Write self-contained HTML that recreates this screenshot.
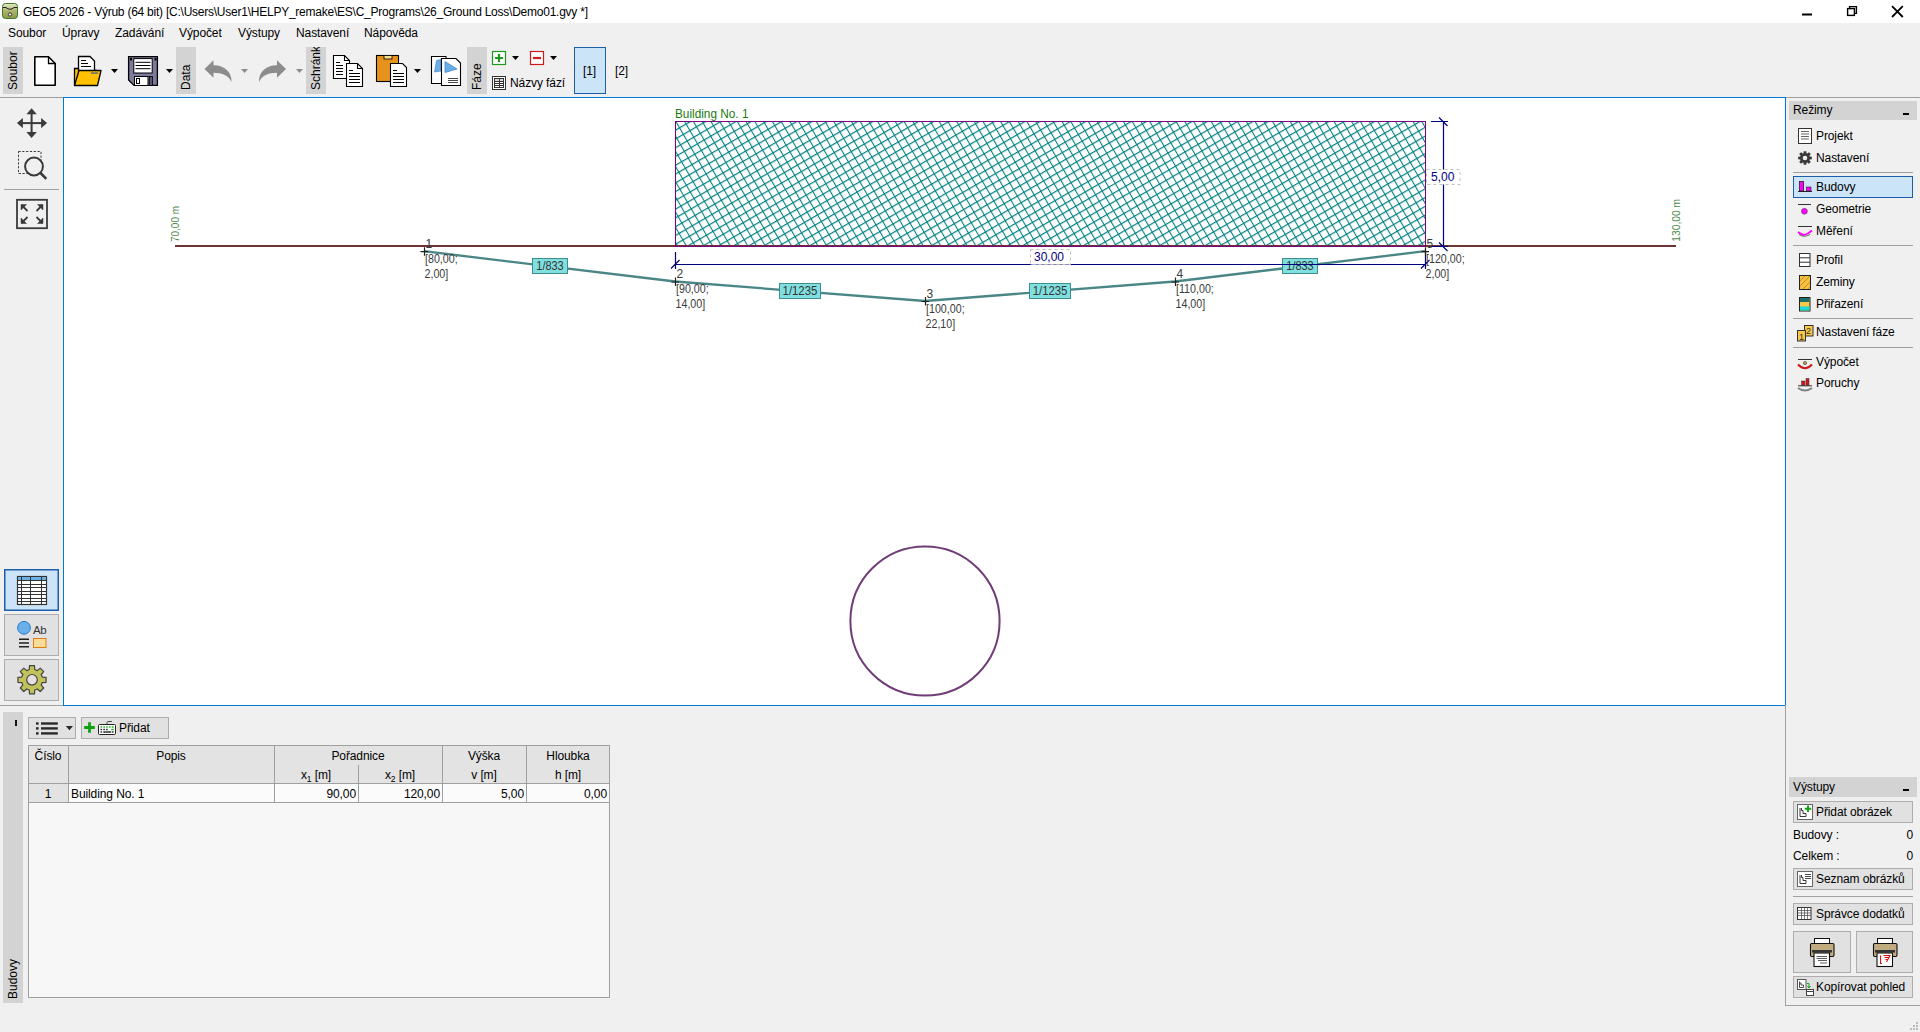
<!DOCTYPE html>
<html><head><meta charset="utf-8">
<style>
*{box-sizing:border-box;margin:0;padding:0}
html,body{width:1920px;height:1032px;overflow:hidden;background:#f0f0f0;font-family:"Liberation Sans",sans-serif;font-size:12px;color:#000}
.a{position:absolute}
.t{position:absolute;white-space:pre;line-height:16px;font-size:12px;letter-spacing:-0.1px}
.vt{position:absolute;background:#d3d3d3}
.vt span{position:absolute;white-space:pre;transform:rotate(-90deg);transform-origin:0 0;line-height:16px;font-size:12px}
.btn{position:absolute;background:#e1e1e1;border:1px solid #adadad}
.sep{position:absolute;height:1px;background:#a0a0a0}
</style></head><body>

<!-- title bar -->
<div class="a" style="left:0;top:0;width:1920px;height:23px;background:#fff"></div>
<svg class="a" style="left:2px;top:3px" width="16" height="16" viewBox="0 0 16 16">
 <defs><linearGradient id="gi" x1="0" y1="0" x2="0" y2="1"><stop offset="0" stop-color="#e6ecc8"/><stop offset="0.5" stop-color="#aab46a"/><stop offset="1" stop-color="#8a9a48"/></linearGradient></defs>
 <rect x="0.5" y="0.5" width="15" height="15" rx="3" fill="url(#gi)" stroke="#3a7a2a"/>
 <path d="M1 4.5 L4 4.5 Q8 8 12 4.5 L15 4.5" fill="none" stroke="#222" stroke-width="1"/>
 <circle cx="8" cy="11.5" r="1.6" fill="#fff" stroke="#222" stroke-width="0.9"/>
</svg>
<div class="t" style="left:23px;top:4px;letter-spacing:-0.24px">GEO5 2026 - Výrub (64 bit) [C:\Users\User1\HELPY_remake\ES\C_Programs\26_Ground Loss\Demo01.gvy *]</div>
<svg class="a" style="left:1790px;top:0" width="130" height="23">
 <rect x="12" y="13.5" width="10" height="2" fill="#000"/>
 <rect x="57.6" y="8.6" width="6.8" height="6.8" fill="none" stroke="#000" stroke-width="1.4"/>
 <path d="M59.6 8.6 V6.6 H66.4 V13.4 H64.4" fill="none" stroke="#000" stroke-width="1.4"/>
 <path d="M102 6.2 L112.8 17 M112.8 6.2 L102 17" stroke="#000" stroke-width="1.8"/>
</svg>

<!-- menu -->
<div class="t" style="left:8px;top:25px">Soubor</div>
<div class="t" style="left:62px;top:25px">Úpravy</div>
<div class="t" style="left:115px;top:25px">Zadávání</div>
<div class="t" style="left:179px;top:25px">Výpočet</div>
<div class="t" style="left:238px;top:25px">Výstupy</div>
<div class="t" style="left:296px;top:25px">Nastavení</div>
<div class="t" style="left:364px;top:25px">Nápověda</div>

<!-- TOOLBAR -->
<!-- toolbar tabs -->
<div class="vt" style="left:3px;top:47px;width:20px;height:47px;overflow:hidden"><span style="left:2px;top:42.5px">Soubor</span></div>
<div class="vt" style="left:176px;top:47px;width:20px;height:47px;overflow:hidden"><span style="left:1.5px;top:42.5px">Data</span></div>
<div class="vt" style="left:306px;top:47px;width:20px;height:47px;overflow:hidden"><span style="left:1.5px;top:42.5px">Schránka</span></div>
<div class="vt" style="left:467px;top:47px;width:20px;height:47px;overflow:hidden"><span style="left:1.5px;top:42.5px">Fáze</span></div>
<svg class="a" style="left:0;top:0" width="700" height="97" viewBox="0 0 700 97">
 <!-- new -->
 <path d="M34.8 56.8 H48.5 L55.2 63.5 V85.2 H34.8 Z" fill="#fff" stroke="#000" stroke-width="1.6" stroke-linejoin="round"/>
 <path d="M48.5 56.8 V63.5 H55.2" fill="none" stroke="#000" stroke-width="1.3"/>
 <!-- open -->
 <path d="M78.5 56.5 H90 L94.5 61 V73 H78.5 Z" fill="#fff" stroke="#000" stroke-width="1.3"/>
 <path d="M81 60.5 H86 M81 63.5 H88 M81 66.5 H91" stroke="#000" stroke-width="1"/>
 <path d="M74.5 85.5 V68.5 H78.5 V73 H95 V70.5 H97" fill="#ffc000" stroke="#000" stroke-width="1.3"/>
 <path d="M79 70.5 H101 L97.5 85.5 H74.5 Z" fill="#ffc000" stroke="#000" stroke-width="1.3" stroke-linejoin="round"/>
 <rect x="91" y="72.3" width="7" height="1.6" fill="#6a7080"/>
 <path d="M111 69 H118 L114.5 73 Z" fill="#000"/>
 <!-- save -->
 <path d="M128.6 56.6 H157.4 V85.4 H134 L128.6 80 Z" fill="#7d7a9c" stroke="#000" stroke-width="1.3"/>
 <rect x="133.8" y="58.6" width="18.4" height="14.4" fill="#fff" stroke="#000" stroke-width="1"/>
 <path d="M135.5 62.3 H150.5 M135.5 65.5 H150.5 M135.5 68.7 H150.5" stroke="#000" stroke-width="1"/>
 <rect x="134.5" y="76.5" width="13.5" height="9" fill="#fff" stroke="#000" stroke-width="1"/>
 <rect x="136.5" y="78.5" width="3" height="5" fill="none" stroke="#000" stroke-width="1"/>
 <rect x="149.5" y="76.5" width="3" height="9" fill="#5a5878" stroke="#000" stroke-width="0.8"/>
 <rect x="130" y="58" width="2" height="2.5" fill="#000"/><rect x="154.5" y="58" width="2" height="2.5" fill="#000"/>
 <path d="M166 69 H173 L169.5 73 Z" fill="#000"/>
 <!-- undo / redo -->
 <path id="undo" d="M204.5 69 L213.5 60.3 V65.3 C224 65 232 72 231.5 82 C228.5 75.5 222.5 72.8 213.5 72.8 V77.7 Z" fill="#8c8c8c"/>
 <use href="#undo" transform="translate(490.5,0) scale(-1,1)"/>
 <path d="M241 69 H248 L244.5 73 Z" fill="#8c8c8c"/>
 <path d="M296 69 H303 L299.5 73 Z" fill="#8c8c8c"/>
 <!-- copy -->
 <g stroke="#000" stroke-width="1.1">
 <path d="M333.5 55.5 H344.5 L349.5 60.5 V78.5 H333.5 Z" fill="#fff"/>
 <path d="M344.5 55.5 V60.5 H349.5" fill="none"/>
 <path d="M336 62.5 H340 M336 65.5 H343 M336 68.5 H343 M336 71.5 H343 M336 74.5 H343" fill="none"/>
 <path d="M346.5 63.5 H357.5 L362.5 68.5 V86.5 H346.5 Z" fill="#fff"/>
 <path d="M357.5 63.5 V68.5 H362.5" fill="none"/>
 <path d="M349 70.5 H353 M349 73.5 H360 M349 76.5 H360 M349 79.5 H360 M349 82.5 H360" fill="none"/>
 </g>
 <!-- paste -->
 <rect x="376.5" y="55.5" width="22" height="26" fill="#e8921e" stroke="#000" stroke-width="1.1"/>
 <rect x="384" y="55.5" width="8" height="3.5" fill="#f8dc8c" stroke="#000" stroke-width="0.8"/>
 <path d="M390.5 63.5 H402.5 L406.5 67.5 V86.5 H390.5 Z" fill="#fff" stroke="#000" stroke-width="1.1"/>
 <path d="M393 70.5 H397 M393 73.5 H404 M393 76.5 H404 M393 79.5 H404 M393 82.5 H404" stroke="#000" stroke-width="1"/>
 <path d="M414 69 H421 L417.5 73 Z" fill="#000"/>
 <!-- paste special -->
 <path d="M431.5 56.5 H446 V83.5 H431.5 Z" fill="#fff" stroke="#000" stroke-width="1.1"/>
 <path d="M436.5 60.5 L441 59.5 V71 L434.5 72 Z" fill="#6aaee8" stroke="#3a7ac0" stroke-width="0.6"/>
 <path d="M441.5 58.5 H456 L460.5 63 V85.5 H441.5 Z" fill="#fff" stroke="#000" stroke-width="1.1"/>
 <path d="M445 61.5 L457 69 L445 72.5 Z" fill="#6aaee8" stroke="#3a7ac0" stroke-width="0.7"/>
 <path d="M448 78.5 H458 M448 80.5 H458 M448 82.5 H458" stroke="#444" stroke-width="1"/>
 <!-- phases -->
 <rect x="492.5" y="51.5" width="13" height="13" fill="#fff" stroke="#1e9a1e" stroke-width="1.2"/>
 <path d="M499 54 V62 M495 58 H503" stroke="#1e9a1e" stroke-width="2.2"/>
 <path d="M512 56 H519 L515.5 60 Z" fill="#000"/>
 <rect x="530.5" y="51.5" width="13" height="13" fill="#fff" stroke="#d01a1a" stroke-width="1.2"/>
 <path d="M533 58 H541" stroke="#d01a1a" stroke-width="2.2"/>
 <path d="M550 56 H557 L553.5 60 Z" fill="#000"/>
 <rect x="492.5" y="76.5" width="13" height="13" fill="#fff" stroke="#333" stroke-width="1"/>
 <rect x="495" y="79" width="8.5" height="2.5" fill="#d8d8d8"/>
 <rect x="494.5" y="78.5" width="9" height="9" fill="none" stroke="#333" stroke-width="1"/>
 <path d="M494.5 81.5 H503.5 M494.5 83.5 H503.5 M494.5 85.5 H503.5 M499.5 78.5 V87.5" stroke="#333" stroke-width="1"/>
</svg>
<div class="t" style="left:510px;top:75px">Názvy fází</div>
<div class="a" style="left:574px;top:47px;width:32px;height:47px;background:#cce4f7;border:1px solid #1c5fa8"></div>
<div class="t" style="left:583px;top:63px">[1]</div>
<div class="t" style="left:615px;top:63px">[2]</div>


<!-- canvas -->
<div class="a" style="left:63px;top:97px;width:1723px;height:609px;background:#fff;border:1px solid #0078d7"></div>
<div class="a" style="left:0;top:97px;width:63px;height:1px;background:#a0a0a0"></div>
<div class="a" style="left:1786px;top:97px;width:134px;height:1px;background:#a0a0a0"></div>
<div class="a" style="left:0;top:705px;width:63px;height:1px;background:#a0a0a0"></div>

<!--CANVAS--><svg class="a" style="left:64px;top:98px" width="1721" height="607" viewBox="64 98 1721 607" font-family="Liberation Sans" font-size="12">
<defs><pattern id="hatch" patternUnits="userSpaceOnUse" width="7.6" height="7.6" patternTransform="translate(675,121) rotate(-30)">
 <path d="M0 0.5 H7.6 M0.5 0 V7.6" stroke="#008080" stroke-width="1.15" fill="none"/></pattern></defs>
<rect x="675" y="121" width="751" height="125" fill="url(#hatch)"/>
<rect x="175" y="245" width="1501" height="2" fill="#6e3434"/>
<rect x="675.5" y="121.5" width="750" height="124.9" fill="none" stroke="#800080" stroke-width="1"/>
<text x="675" y="118" fill="#1a7a10" textLength="73.5" lengthAdjust="spacingAndGlyphs">Building No. 1</text>
<text transform="translate(179,242) rotate(-90)" fill="#4a8a4a" font-size="11.5" textLength="36" lengthAdjust="spacingAndGlyphs">70,00 m</text>
<text transform="translate(1680,241.7) rotate(-90)" fill="#4a8a4a" font-size="11.5" textLength="42.7" lengthAdjust="spacingAndGlyphs">130,00 m</text>
<polyline points="424,251.2 675,281.5 925,301 1175,281.5 1425,251.2" fill="none" stroke="#4a8686" stroke-width="2.3"/>
<rect x="532.5" y="258.5" width="35" height="15" fill="#80e0e0" stroke="#3e8e8e" stroke-width="1"/>
<text x="536.3" y="269.5" fill="#333" textLength="27.4" lengthAdjust="spacingAndGlyphs">1/833</text>
<rect x="779.5" y="283.5" width="41" height="15" fill="#80e0e0" stroke="#3e8e8e" stroke-width="1"/>
<text x="782.6" y="294.5" fill="#333" textLength="34.7" lengthAdjust="spacingAndGlyphs">1/1235</text>
<rect x="1029.5" y="283.5" width="41" height="15" fill="#80e0e0" stroke="#3e8e8e" stroke-width="1"/>
<text x="1032.7" y="294.5" fill="#333" textLength="34.7" lengthAdjust="spacingAndGlyphs">1/1235</text>
<rect x="1282.5" y="258.5" width="35" height="15" fill="#80e0e0" stroke="#3e8e8e" stroke-width="1"/>
<text x="1286.3" y="269.5" fill="#333" textLength="27.4" lengthAdjust="spacingAndGlyphs">1/833</text>
<g stroke="#000080" stroke-width="1.2" fill="none">
<path d="M675.5 264.5 H1425.5"/>
<path d="M675.5 252 V269 M1425.5 252 V269"/>
<path d="M671 268.5 L679.5 260 M1421 268.5 L1429.5 260"/>
<path d="M1443.5 121 V246 M1431 121.5 H1448 M1431 246.5 H1448"/>
<path d="M1439 117.5 L1447.5 126 M1439 242.5 L1447.5 251"/>
</g>
<rect x="1030.5" y="249.5" width="40" height="15" fill="#fff" stroke="#c0c0c0" stroke-width="1" stroke-dasharray="3 3"/>
<text x="1034" y="261" fill="#000080">30,00</text>
<rect x="1426.5" y="169.5" width="33.5" height="15" fill="#fff" stroke="#c0c0c0" stroke-width="1" stroke-dasharray="3 3"/>
<text x="1431" y="180.7" fill="#000080">5,00</text>
<path d="M420.5 251.7 H428 M424.5 247.2 V255.7" stroke="#222" stroke-width="1.2"/>
<text x="425.5" y="247.7" fill="#3a3a3a">1</text>
<text x="425" y="263.0" fill="#3a3a3a" textLength="32.7" lengthAdjust="spacingAndGlyphs">[80,00;</text>
<text x="424.5" y="278.0" fill="#3a3a3a" textLength="23.8" lengthAdjust="spacingAndGlyphs">2,00]</text>
<path d="M671.5 282.0 H679 M675.5 277.5 V286.0" stroke="#222" stroke-width="1.2"/>
<text x="676.5" y="278.0" fill="#3a3a3a">2</text>
<text x="676" y="293.3" fill="#3a3a3a" textLength="32.7" lengthAdjust="spacingAndGlyphs">[90,00;</text>
<text x="675.5" y="308.3" fill="#3a3a3a" textLength="29.7" lengthAdjust="spacingAndGlyphs">14,00]</text>
<path d="M921.5 301.5 H929 M925.5 297 V305.5" stroke="#222" stroke-width="1.2"/>
<text x="926.5" y="297.5" fill="#3a3a3a">3</text>
<text x="926" y="312.8" fill="#3a3a3a" textLength="38.6" lengthAdjust="spacingAndGlyphs">[100,00;</text>
<text x="925.5" y="327.8" fill="#3a3a3a" textLength="29.7" lengthAdjust="spacingAndGlyphs">22,10]</text>
<path d="M1171.5 282.0 H1179 M1175.5 277.5 V286.0" stroke="#222" stroke-width="1.2"/>
<text x="1176.5" y="278.0" fill="#3a3a3a">4</text>
<text x="1176" y="293.3" fill="#3a3a3a" textLength="37.8" lengthAdjust="spacingAndGlyphs">[110,00;</text>
<text x="1175.5" y="308.3" fill="#3a3a3a" textLength="29.7" lengthAdjust="spacingAndGlyphs">14,00]</text>
<path d="M1421.5 251.7 H1429 M1425.5 247.2 V255.7" stroke="#222" stroke-width="1.2"/>
<text x="1426.5" y="247.7" fill="#3a3a3a">5</text>
<text x="1426" y="263.0" fill="#3a3a3a" textLength="38.6" lengthAdjust="spacingAndGlyphs">[120,00;</text>
<text x="1425.5" y="278.0" fill="#3a3a3a" textLength="23.8" lengthAdjust="spacingAndGlyphs">2,00]</text>
<circle cx="925" cy="621" r="74.6" fill="none" stroke="#703c78" stroke-width="2"/>
</svg><!--/CANVAS-->
<!-- left toolbar -->
<svg class="a" style="left:0;top:97px" width="63" height="608" viewBox="0 97 63 608">
 <!-- move -->
 <g fill="#3a3a3a">
  <rect x="30.6" y="112" width="2" height="22"/>
  <rect x="21" y="122.1" width="22" height="2"/>
  <path d="M31.6 108.2 L36.8 114.2 H26.4 Z"/>
  <path d="M31.6 138 L36.8 132 H26.4 Z"/>
  <path d="M16.9 123.1 L22.9 117.9 V128.3 Z"/>
  <path d="M47.1 123.1 L41.1 117.9 V128.3 Z"/>
 </g>
 <!-- zoom -->
 <rect x="18.5" y="151.5" width="22.5" height="22" fill="none" stroke="#3a3a3a" stroke-width="1" stroke-dasharray="2.2 1.6"/>
 <circle cx="34" cy="166.5" r="8.9" fill="#f0f0f0" stroke="#3a3a3a" stroke-width="2"/>
 <path d="M40.5 173 L46.3 178.8" stroke="#3a3a3a" stroke-width="2.6"/>
 <rect x="4" y="189" width="55" height="1" fill="#a0a0a0"/>
 <!-- fit -->
 <rect x="17" y="199.8" width="30" height="28.4" fill="none" stroke="#3a3a3a" stroke-width="1.8"/>
 <g fill="#3a3a3a" stroke="#3a3a3a">
  <path d="M21.5 205 L27.5 211" stroke-width="1.8"/><path d="M21 204.5 H26.5 L21 210 Z" stroke-width="0.5"/>
  <path d="M42.5 205 L36.5 211" stroke-width="1.8"/><path d="M43 204.5 H37.5 L43 210 Z" stroke-width="0.5"/>
  <path d="M21.5 223 L27.5 217" stroke-width="1.8"/><path d="M21 223.5 H26.5 L21 218 Z" stroke-width="0.5"/>
  <path d="M42.5 223 L36.5 217" stroke-width="1.8"/><path d="M43 223.5 H37.5 L43 218 Z" stroke-width="0.5"/>
 </g>
 <!-- table button -->
 <rect x="4.75" y="569.75" width="53.5" height="40.5" fill="#cce4f7" stroke="#1c5fa8" stroke-width="1.5"/>
 <rect x="17.5" y="576.5" width="29" height="28" fill="#fff" stroke="#333" stroke-width="1.2"/>
 <rect x="18" y="577" width="28" height="3.5" fill="#6ab0e8"/>
 <g stroke="#333" stroke-width="1">
  <path d="M17.5 580.5 H46.5 M17.5 584.5 H46.5 M17.5 587.5 H46.5 M17.5 591.5 H46.5 M17.5 594.5 H46.5 M17.5 598.5 H46.5 M17.5 601.5 H46.5"/>
  <path d="M21.5 576.5 V604.5 M30.5 576.5 V604.5 M41.5 576.5 V604.5"/>
 </g>
 <!-- objects button -->
 <rect x="4.5" y="614.5" width="54" height="41" fill="#e1e1e1" stroke="#adadad" stroke-width="1"/>
 <circle cx="24" cy="627.8" r="6.4" fill="#6ab0e8" stroke="#2a7ad0" stroke-width="1"/>
 <text x="33" y="633.5" font-family="Liberation Sans" font-size="11.5" fill="#333" letter-spacing="-0.3">Ab</text>
 <path d="M19 639.3 H29 M19 643 H29 M19 646.7 H29" stroke="#222" stroke-width="1.5"/>
 <rect x="33.5" y="638.5" width="12.5" height="9" fill="#f8dc98" stroke="#e07c10" stroke-width="1"/>
 <!-- gear button -->
 <rect x="4.5" y="659.5" width="54" height="41" fill="#e1e1e1" stroke="#adadad" stroke-width="1"/>
 <g id="gear" transform="translate(32,679.8)">
  <path d="M-2.74 -10.24 L-2.48 -14.08 L2.48 -14.08 L2.74 -10.24 L5.30 -9.18 L8.20 -11.71 L11.71 -8.20 L9.18 -5.30 L10.24 -2.74 L14.08 -2.48 L14.08 2.48 L10.24 2.74 L9.18 5.30 L11.71 8.20 L8.20 11.71 L5.30 9.18 L2.74 10.24 L2.48 14.08 L-2.48 14.08 L-2.74 10.24 L-5.30 9.18 L-8.20 11.71 L-11.71 8.20 L-9.18 5.30 L-10.24 2.74 L-14.08 2.48 L-14.08 -2.48 L-10.24 -2.74 L-9.18 -5.30 L-11.71 -8.20 L-8.20 -11.71 L-5.30 -9.18 Z" fill="#c2c25a" stroke="#444" stroke-width="1.2" stroke-linejoin="round"/>
  <circle r="5.3" fill="#e1e1e1" stroke="#444" stroke-width="1.2"/>
 </g>
</svg>

<!-- right panel -->
<div class="a" style="left:1789px;top:101px;width:128px;height:19px;background:#d3d3d3"></div>
<div class="t" style="left:1793px;top:102px">Režimy</div>
<div class="a" style="left:1903px;top:113px;width:6px;height:2px;background:#000"></div>
<div class="t" style="left:1816px;top:128px">Projekt</div>
<div class="t" style="left:1816px;top:150px">Nastavení</div>
<div class="sep" style="left:1793px;top:172px;width:120px"></div>
<div class="a" style="left:1793px;top:176px;width:120px;height:22px;background:#cce4f7;border:1px solid #1c5fa8"></div>
<div class="t" style="left:1816px;top:179px">Budovy</div>
<div class="t" style="left:1816px;top:201px">Geometrie</div>
<div class="t" style="left:1816px;top:223px">Měření</div>
<div class="sep" style="left:1793px;top:245px;width:120px"></div>
<div class="t" style="left:1816px;top:252px">Profil</div>
<div class="t" style="left:1816px;top:274px">Zeminy</div>
<div class="t" style="left:1816px;top:296px">Přiřazení</div>
<div class="sep" style="left:1793px;top:318px;width:120px"></div>
<div class="t" style="left:1816px;top:324px">Nastavení fáze</div>
<div class="sep" style="left:1793px;top:347px;width:120px"></div>
<div class="t" style="left:1816px;top:354px">Výpočet</div>
<div class="t" style="left:1816px;top:375px">Poruchy</div>
<svg class="a" style="left:1790px;top:120px" width="30" height="280" viewBox="1790 120 30 280">
 <!-- projekt -->
 <rect x="1798.5" y="128.5" width="13" height="15" fill="#fff" stroke="#333" stroke-width="1"/>
 <path d="M1801 131.5 H1809 M1801 134 H1809 M1801 136.5 H1809 M1801 139 H1809" stroke="#555" stroke-width="0.9"/>
 <!-- nastaveni gear -->
 <g transform="translate(1805,158)"><path d="M-1.46 -4.78 L-1.34 -6.87 L1.34 -6.87 L1.46 -4.78 L2.35 -4.41 L3.91 -5.80 L5.80 -3.91 L4.41 -2.35 L4.78 -1.46 L6.87 -1.34 L6.87 1.34 L4.78 1.46 L4.41 2.35 L5.80 3.91 L3.91 5.80 L2.35 4.41 L1.46 4.78 L1.34 6.87 L-1.34 6.87 L-1.46 4.78 L-2.35 4.41 L-3.91 5.80 L-5.80 3.91 L-4.41 2.35 L-4.78 1.46 L-6.87 1.34 L-6.87 -1.34 L-4.78 -1.46 L-4.41 -2.35 L-5.80 -3.91 L-3.91 -5.80 L-2.35 -4.41 Z" fill="#3a3a3a"/><circle r="2.3" fill="#f0f0f0"/></g>
 <!-- budovy -->
 <rect x="1799.5" y="181.5" width="4" height="9.5" fill="#ff00ff" stroke="#222" stroke-width="0.8"/>
 <rect x="1806.5" y="187" width="4.5" height="4" fill="#ff00ff" stroke="#222" stroke-width="0.6"/>
 <path d="M1798 191.5 H1812" stroke="#222" stroke-width="1"/>
 <!-- geometrie -->
 <path d="M1798 204.5 H1811" stroke="#333" stroke-width="1"/>
 <circle cx="1804.4" cy="211.3" r="3" fill="#ff00ff" stroke="#444" stroke-width="0.5"/>
 <!-- mereni -->
 <path d="M1798 226.5 H1812" stroke="#333" stroke-width="1"/>
 <path d="M1798 232 Q1801 234.5 1804 235 Q1808 234 1812 230.5" fill="none" stroke="#ff00ff" stroke-width="1.8"/>
 <path d="M1799 234.5 Q1804 238 1810 234.5" fill="none" stroke="#444" stroke-width="0.8"/>
 <!-- profil -->
 <rect x="1799.5" y="253.5" width="10.5" height="13" fill="#fff" stroke="#333" stroke-width="1"/>
 <path d="M1799.5 257.8 H1810 M1799.5 262.2 H1810" stroke="#333" stroke-width="1"/>
 <!-- zeminy -->
 <rect x="1799.5" y="275.5" width="11" height="14" fill="#f8c040" stroke="#222" stroke-width="1"/>
 <path d="M1800 281 L1805 276 M1800 286 L1810 276 M1803 289 L1810 282 M1808 289 L1810 287" stroke="#b08020" stroke-width="0.8"/>
 <!-- prirazeni -->
 <rect x="1799.5" y="297.5" width="10.5" height="13.5" fill="#f8c848" stroke="#222" stroke-width="1"/>
 <rect x="1800" y="298" width="9.5" height="4" fill="#1a7068"/>
 <rect x="1800" y="306.5" width="9.5" height="4" fill="#18d8d8"/>
 <!-- nastaveni faze -->
 <rect x="1804.5" y="325.5" width="8.5" height="10.5" fill="#f8c848" stroke="#333" stroke-width="1"/>
 <text x="1806" y="334" font-family="Liberation Sans" font-size="9" fill="#333">2</text>
 <rect x="1797.5" y="330.5" width="8" height="10.5" fill="#f8c848" stroke="#333" stroke-width="1"/>
 <text x="1799" y="339.5" font-family="Liberation Sans" font-size="9" fill="#333">1</text>
 <!-- vypocet -->
 <path d="M1798 359.5 H1812" stroke="#333" stroke-width="1"/>
 <circle cx="1805" cy="363" r="1.6" fill="#c8a040" stroke="#333" stroke-width="0.6"/>
 <path d="M1798 364.5 Q1805 372 1812 364.5" fill="none" stroke="#d01818" stroke-width="2"/>
 <!-- poruchy -->
 <rect x="1801.5" y="381" width="3.5" height="4.5" fill="#d01818" stroke="#333" stroke-width="0.5"/>
 <rect x="1806" y="378.5" width="3" height="7" fill="#d01818" stroke="#333" stroke-width="0.5"/>
 <path d="M1798 385.8 H1812" stroke="#333" stroke-width="1"/>
 <path d="M1798 388 Q1805 393 1812 388" fill="none" stroke="#808080" stroke-width="2"/>
</svg>

<!-- vystupy -->
<div class="a" style="left:1785px;top:705px;width:1px;height:301px;background:#a0a0a0"></div>
<div class="a" style="left:1785px;top:1005px;width:135px;height:1px;background:#a0a0a0"></div>
<div class="a" style="left:1789px;top:777px;width:128px;height:20px;background:#d3d3d3"></div>
<div class="t" style="left:1793px;top:779px">Výstupy</div>
<div class="a" style="left:1903px;top:789px;width:6px;height:2px;background:#000"></div>
<div class="btn" style="left:1793px;top:801px;width:120px;height:22px"></div>
<div class="t" style="left:1816px;top:804px">Přidat obrázek</div>
<div class="t" style="left:1793px;top:827px">Budovy :</div>
<div class="t" style="left:1900px;top:827px;width:13px;text-align:right">0</div>
<div class="t" style="left:1793px;top:848px">Celkem :</div>
<div class="t" style="left:1900px;top:848px;width:13px;text-align:right">0</div>
<div class="btn" style="left:1793px;top:868px;width:120px;height:22px"></div>
<div class="t" style="left:1816px;top:871px">Seznam obrázků</div>
<div class="sep" style="left:1793px;top:896px;width:120px"></div>
<div class="btn" style="left:1793px;top:903px;width:120px;height:22px"></div>
<div class="t" style="left:1816px;top:906px">Správce dodatků</div>
<div class="btn" style="left:1793px;top:931px;width:58px;height:42px"></div>
<div class="btn" style="left:1856px;top:931px;width:57px;height:42px"></div>
<div class="btn" style="left:1793px;top:976px;width:120px;height:22px"></div>
<div class="t" style="left:1816px;top:979px">Kopírovat pohled</div>
<svg class="a" style="left:1790px;top:800px" width="130" height="232" viewBox="1790 800 130 232">
 <!-- pridat obrazek icon -->
 <rect x="1797.5" y="804.5" width="15" height="15" fill="#fff" stroke="#666" stroke-width="1"/>
 <path d="M1800 808 V816.5 H1806 V813.5 H1803 V810.5 H1801.5 V808" fill="none" stroke="#222" stroke-width="0.9"/>
 <path d="M1808 805.5 V812 M1804.8 808.7 H1811.2" stroke="#10a010" stroke-width="2"/>
 <!-- seznam icon -->
 <rect x="1797.5" y="871.5" width="15" height="15" fill="#fff" stroke="#666" stroke-width="1"/>
 <path d="M1800 875 V883.5 H1806 V880.5 H1803 V877.5 H1801.5 V875" fill="none" stroke="#222" stroke-width="0.9"/>
 <path d="M1805 874.5 H1811 M1805 876.5 H1811 M1805 878.5 H1811" stroke="#333" stroke-width="0.9"/>
 <!-- spravce icon -->
 <rect x="1797.5" y="907.5" width="13.5" height="12" fill="#fff" stroke="#333" stroke-width="1"/>
 <path d="M1798 910.5 H1811 M1798 913 H1811 M1798 915.5 H1811 M1801.5 907.5 V919.5 M1804.5 907.5 V919.5 M1807.5 907.5 V919.5" stroke="#555" stroke-width="0.8"/>
 <!-- printers -->
 <g id="printer">
  <rect x="1814.5" y="938.5" width="15" height="7" fill="#fff" stroke="#111" stroke-width="1"/>
  <rect x="1810.5" y="943.5" width="23.5" height="13" rx="1.2" fill="#c0ac80" stroke="#111" stroke-width="1.1"/>
  <rect x="1812" y="950" width="20" height="2.5" fill="#333"/>
  <rect x="1814" y="953" width="15.5" height="13.5" fill="#fff" stroke="#111" stroke-width="1.1"/>
 </g>
 <path d="M1816.5 956.5 H1827 M1816.5 958.5 H1827 M1818 960.5 H1827 M1820 963 H1827" stroke="#333" stroke-width="0.8"/>
 <use href="#printer" transform="translate(63,0)"/>
 <path d="M1880.5 955.5 V963.5 H1882 M1883.5 955.5 H1890 L1886.5 962 M1884.5 957.5 H1889 M1885.5 959.5 H1888" fill="none" stroke="#e01010" stroke-width="1.1"/>
 <!-- kopirovat icon -->
 <rect x="1797.5" y="979.5" width="8.5" height="10" fill="#fff" stroke="#555" stroke-width="1"/>
 <path d="M1799.5 981.5 V987.5 H1803.5 V985 H1801 V983 H1800" fill="none" stroke="#222" stroke-width="0.8"/>
 <path d="M1807 983.5 H1809 V987.5 M1807.5 986 L1809 988 L1810.5 986" fill="none" stroke="#10a010" stroke-width="1"/>
 <rect x="1806.5" y="989.5" width="7" height="6" fill="#fff" stroke="#444" stroke-width="1"/>
 <path d="M1806.5 991.5 H1813.5" stroke="#444" stroke-width="1"/>
 <!-- grip -->
 <g fill="#bcbcbc"><rect x="1916" y="1022" width="2" height="2"/><rect x="1913" y="1025" width="2" height="2"/><rect x="1916" y="1025" width="2" height="2"/><rect x="1910" y="1028" width="2" height="2"/><rect x="1913" y="1028" width="2" height="2"/><rect x="1916" y="1028" width="2" height="2"/></g>
</svg>

<!-- bottom panel -->
<div class="vt" style="left:3px;top:712px;width:20px;height:291px;overflow:hidden"><span style="left:1.75px;top:286.5px">Budovy</span></div>
<div class="a" style="left:15px;top:720px;width:2px;height:6px;background:#111"></div>
<div class="btn" style="left:28px;top:717px;width:48px;height:22px"></div>
<div class="btn" style="left:81px;top:717px;width:88px;height:22px"></div>
<svg class="a" style="left:28px;top:715px" width="145" height="26" viewBox="28 715 145 26">
 <g fill="#2a2a2a">
  <rect x="36" y="722.3" width="2.6" height="2.4"/><rect x="36" y="727.2" width="2.6" height="2.4"/><rect x="36" y="732.2" width="2.6" height="2.4"/>
  <rect x="41" y="722.3" width="16.8" height="2.4"/><rect x="41" y="727.2" width="16.8" height="2.4"/><rect x="41" y="732.2" width="16.8" height="2.4"/>
  <path d="M65.8 726 H73 L69.4 730.2 Z"/>
 </g>
 <path d="M89.5 722.3 V732.7 M84.2 727.5 H94.8" stroke="#10a010" stroke-width="2.8"/>
 <rect x="98.5" y="724.5" width="17" height="10" rx="1" fill="#fff" stroke="#222" stroke-width="1"/>
 <path d="M107 724.5 V722.5 Q107 721.5 109 721.5 H112" fill="none" stroke="#222" stroke-width="0.8"/>
 <g fill="#18b018"><rect x="100.5" y="726.3" width="1.6" height="1.4"/><rect x="103.3" y="726.3" width="1.6" height="1.4"/><rect x="106.1" y="726.3" width="1.6" height="1.4"/><rect x="108.9" y="726.3" width="1.6" height="1.4"/><rect x="111.7" y="726.3" width="2" height="1.4"/><rect x="111.2" y="728.8" width="2.5" height="1.4"/></g>
 <g fill="#222"><rect x="100.5" y="728.8" width="1.6" height="1.4"/><rect x="103.3" y="728.8" width="1.6" height="1.4"/><rect x="106.1" y="728.8" width="1.6" height="1.4"/><rect x="100.5" y="731.3" width="1.6" height="1.4"/><rect x="103.3" y="731.3" width="8" height="1.4"/><rect x="112" y="731.3" width="1.6" height="1.4"/></g>
</svg>
<div class="t" style="left:119px;top:720px">Přidat</div>

<!-- table -->
<div class="a" style="left:28px;top:745px;width:582px;height:253px;background:#f7f7f7;border:1px solid #a0a0a0"></div>
<div class="a" style="left:29px;top:746px;width:580px;height:37px;background:#e3e3e3"></div>
<div class="a" style="left:29px;top:784px;width:39px;height:18px;background:#e3e3e3"></div>
<div class="a" style="left:69px;top:784px;width:540px;height:18px;background:#fbfbfb"></div>
<div class="a" style="left:29px;top:783px;width:580px;height:1px;background:#a0a0a0"></div>
<div class="a" style="left:29px;top:802px;width:580px;height:1px;background:#a0a0a0"></div>
<div class="a" style="left:68px;top:746px;width:1px;height:56px;background:#a0a0a0"></div>
<div class="a" style="left:274px;top:746px;width:1px;height:56px;background:#a0a0a0"></div>
<div class="a" style="left:358px;top:765px;width:1px;height:37px;background:#a0a0a0"></div>
<div class="a" style="left:442px;top:746px;width:1px;height:56px;background:#a0a0a0"></div>
<div class="a" style="left:526px;top:746px;width:1px;height:56px;background:#a0a0a0"></div>
<div class="t" style="left:28px;top:748px;width:40px;text-align:center">Číslo</div>
<div class="t" style="left:68px;top:748px;width:206px;text-align:center">Popis</div>
<div class="t" style="left:274px;top:748px;width:168px;text-align:center">Pořadnice</div>
<div class="t" style="left:442px;top:748px;width:84px;text-align:center">Výška</div>
<div class="t" style="left:526px;top:748px;width:84px;text-align:center">Hloubka</div>
<div class="t" style="left:274px;top:767px;width:84px;text-align:center">x<sub style="font-size:8.5px;vertical-align:-2.5px;line-height:0">1</sub> [m]</div>
<div class="t" style="left:358px;top:767px;width:84px;text-align:center">x<sub style="font-size:8.5px;vertical-align:-2.5px;line-height:0">2</sub> [m]</div>
<div class="t" style="left:442px;top:767px;width:84px;text-align:center">v [m]</div>
<div class="t" style="left:526px;top:767px;width:84px;text-align:center">h [m]</div>
<div class="t" style="left:28px;top:786px;width:40px;text-align:center">1</div>
<div class="t" style="left:71px;top:786px">Building No. 1</div>
<div class="t" style="left:274px;top:786px;width:82px;text-align:right">90,00</div>
<div class="t" style="left:358px;top:786px;width:82px;text-align:right">120,00</div>
<div class="t" style="left:442px;top:786px;width:82px;text-align:right">5,00</div>
<div class="t" style="left:526px;top:786px;width:81px;text-align:right">0,00</div>


</body></html>
